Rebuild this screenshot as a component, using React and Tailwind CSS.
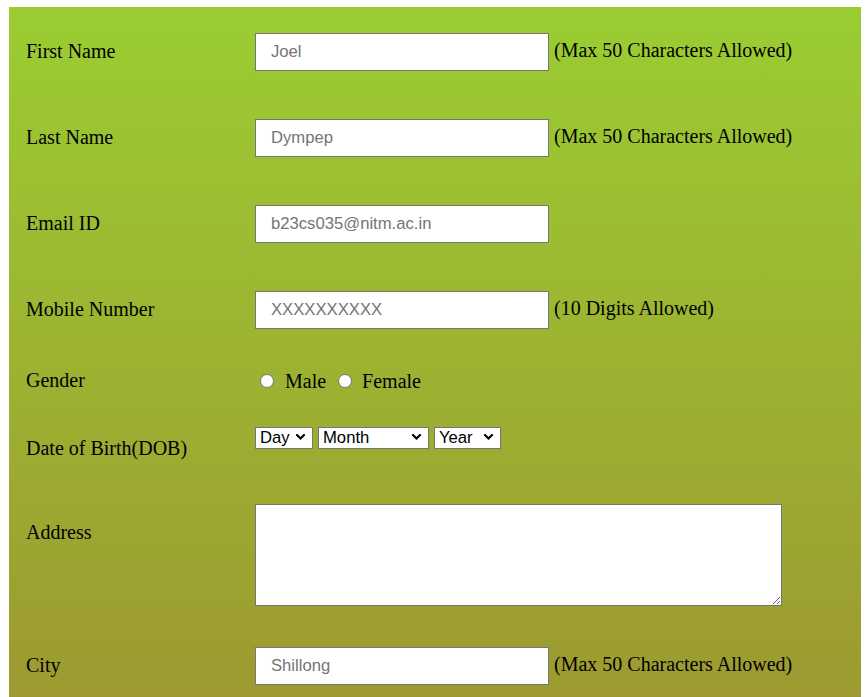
import React from "react";

const serif = { fontFamily: '"Liberation Serif", "Times New Roman", serif' };

function Chevron() {
  return (
    <svg width="9" height="6" viewBox="0 0 9 6" className="pointer-events-none absolute right-[8px] top-[8px]">
      <path d="M1 1 L4.5 4.5 L8 1" fill="none" stroke="#000" strokeWidth="2.1" strokeLinecap="square" />
    </svg>
  );
}

function Select({ w, label }) {
  return (
    <div className={`relative ${w}`}>
      <select
        className="h-[22px] w-full appearance-none rounded-none border border-[#767676] bg-white pl-[4px] text-[16.67px] leading-[19px] text-black"
        style={{ fontFamily: '"Liberation Sans", Arial, sans-serif' }}
        defaultValue=""
      >
        <option value="">{label}</option>
      </select>
      <Chevron />
    </div>
  );
}

function TextInput({ ph }) {
  return (
    <input
      type="text"
      placeholder={ph}
      className="h-[38px] w-[294px] border border-[#767676] bg-white px-[15px] text-[16.67px] text-black outline-none placeholder:text-[#757575]"
      style={{ fontFamily: '"Liberation Sans", Arial, sans-serif' }}
    />
  );
}

function TextRow({ label, ph, note }) {
  return (
    <div className="flex h-[86px]">
      <div className="w-[246px] shrink-0 pl-[17px] pt-[33px] text-[20px] leading-[22px]">{label}</div>
      <div className="flex items-start pt-[26px]">
        <TextInput ph={ph} />
        {note && <span className="ml-[5px] mt-[6px] text-[20px] leading-[22px]">{note}</span>}
      </div>
    </div>
  );
}

export default function App() {
  return (
    <div className="min-h-[697px] bg-white pl-[9px] pt-[7px]" style={serif}>
      <div className="h-[716px] w-[852px] bg-gradient-to-b from-[#9acd32] to-[#9c9830] text-black">
        <TextRow label="First Name" ph="Joel" note="(Max 50 Characters Allowed)" />
        <TextRow label="Last Name" ph="Dympep" note="(Max 50 Characters Allowed)" />
        <TextRow label="Email ID" ph="b23cs035@nitm.ac.in" />
        <TextRow label="Mobile Number" ph="XXXXXXXXXX" note="(10 Digits Allowed)" />

        <div className="flex h-[59px]">
          <div className="w-[246px] shrink-0 pl-[17px] pt-[18px] text-[20px] leading-[22px]">Gender</div>
          <div className="flex h-[41px] items-center pt-[19px] text-[20px] leading-[22px]">
            <input
              type="radio"
              name="gender"
              className="ml-[5px] h-[14px] w-[14px] appearance-none rounded-full border border-[#767676] bg-white"
            />
            <span className="ml-[11px]">Male</span>
            <input
              type="radio"
              name="gender"
              className="ml-[12px] h-[14px] w-[14px] appearance-none rounded-full border border-[#767676] bg-white"
            />
            <span className="ml-[10px]">Female</span>
          </div>
        </div>

        <div className="flex h-[80px]">
          <div className="w-[246px] shrink-0 pl-[17px] pt-[27px] text-[20px] leading-[22px]">Date of Birth(DOB)</div>
          <div className="flex gap-[5px] pt-[16px]">
            <Select w="w-[58px]" label="Day" />
            <Select w="w-[111px]" label="Month" />
            <Select w="w-[67px]" label="Year" />
          </div>
        </div>

        <div className="flex h-[140px]">
          <div className="w-[246px] shrink-0 pl-[17px] pt-[31px] text-[20px] leading-[22px]">Address</div>
          <div className="pt-[14px]">
            <textarea className="block h-[102px] w-[527px] border border-[#767676] bg-white outline-none" />
          </div>
        </div>

        <div className="flex h-[86px]">
          <div className="w-[246px] shrink-0 pl-[17px] pt-[24px] text-[20px] leading-[22px]">City</div>
          <div className="flex items-start pt-[17px]">
            <TextInput ph="Shillong" />
            <span className="ml-[5px] mt-[6px] text-[20px] leading-[22px]">(Max 50 Characters Allowed)</span>
          </div>
        </div>
      </div>
    </div>
  );
}
